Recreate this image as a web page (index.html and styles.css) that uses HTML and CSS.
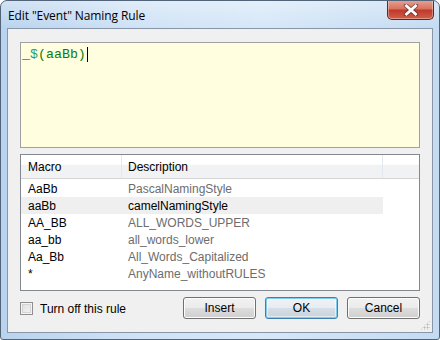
FILE: index.html
```html
<!DOCTYPE html>
<html>
<head>
<meta charset="utf-8">
<link rel="stylesheet" href="styles.css">
</head>
<body>
<div class="window">
  <div class="titlebar">
    <span class="title">Edit "Event" Naming Rule</span>
    <div class="close">
      <svg width="16" height="12" viewBox="0 0 16 12">
        <path d="M3 1.5 L13 10.5 M13 1.5 L3 10.5" stroke="#3a2a2a" stroke-width="4.4" stroke-linecap="round" opacity="0.55"/>
        <path d="M3.5 2 L12.5 10 M12.5 2 L3.5 10" stroke="#ffffff" stroke-width="2.8" stroke-linecap="square"/>
      </svg>
    </div>
  </div>
  <div class="client">
    <div class="editor"><span class="t-u">_</span><span class="t-d">$</span><span class="t-g">(aaBb)</span><span class="caret"></span></div>
    <div class="list">
      <div class="header">
        <div class="hcell c1">Macro</div>
        <div class="hcell c2">Description</div>
        <div class="hcell c3"></div>
      </div>
      <div class="row"><div class="cell c1">AaBb</div><div class="cell c2 desc">PascalNamingStyle</div></div>
      <div class="row sel"><div class="cell c1">aaBb</div><div class="cell c2">camelNamingStyle</div></div>
      <div class="row"><div class="cell c1">AA_BB</div><div class="cell c2 desc">ALL_WORDS_UPPER</div></div>
      <div class="row"><div class="cell c1">aa_bb</div><div class="cell c2 desc">all_words_lower</div></div>
      <div class="row"><div class="cell c1">Aa_Bb</div><div class="cell c2 desc">All_Words_Capitalized</div></div>
      <div class="row"><div class="cell c1">*</div><div class="cell c2 desc">AnyName_withoutRULES</div></div>
    </div>
    <div class="footer">
      <label class="check"><span class="box"></span><span>Turn off this rule</span></label>
      <div class="buttons">
        <button class="btn">Insert</button>
        <button class="btn default">OK</button>
        <button class="btn">Cancel</button>
      </div>
    </div>
    <div class="grip"></div>
  </div>
</div>
</body>
</html>
```
FILE: styles.css
```css
* { box-sizing: border-box; }
html, body { margin: 0; padding: 0; background: #ffffff; }
body { width: 440px; height: 340px; overflow: hidden; }

.window {
  width: 440px;
  height: 340px;
  border: 1px solid #52647a;
  border-radius: 7px 7px 3px 3px;
  background: linear-gradient(90deg, #b9d3ee 0%, #cfe2f6 30%, #d6e7f8 60%, #c4dbf2 100%);
  display: flex;
  flex-direction: column;
  overflow: hidden;
}

.titlebar {
  height: 27px;
  display: flex;
  justify-content: space-between;
  align-items: flex-start;
  padding-left: 7px;
  padding-right: 5px;
  background: linear-gradient(180deg, rgba(255,255,255,0.35) 0%, rgba(255,255,255,0) 100%);
}
.title {
  font-family: "Open Sans", "Noto Sans", sans-serif;
  font-size: 12px;
  color: #000;
  line-height: 14px;
  margin-top: 8px;
  letter-spacing: -0.1px;
}
.close {
  width: 47px;
  height: 20px;
  margin-top: -1px;
  border: 1px solid #5a2a24;
  border-top: none;
  border-radius: 0 0 5px 5px;
  background: linear-gradient(180deg, #e8a595 0%, #d8735f 45%, #c0392a 55%, #d0604a 100%);
  box-shadow: inset 0 0 0 1px rgba(255,255,255,0.35);
  display: flex;
  align-items: center;
  justify-content: center;
}

.client {
  position: relative;
  margin: 0 6px 6px 6px;
  flex: 1;
  border: 1px solid #8797a8;
  background: #f0f0f0;
  padding: 13px 12px 13px 12px;
  display: flex;
  flex-direction: column;
  font-family: "Liberation Sans", Arial, sans-serif;
  font-size: 12px;
}

.editor {
  height: 106px;
  border: 1px solid #a0a0a0;
  background: #ffffe0;
  padding: 4px 1px;
  font-family: "Liberation Mono", "Courier New", monospace;
  font-size: 13.3px;
  line-height: 15px;
  white-space: pre;
  display: flex;
  align-items: flex-start;
}
.t-u { color: #0000ff; }
.t-d { color: #2b9b6b; }
.t-g { color: #0a7d0a; }
.caret {
  display: inline-block;
  width: 1px;
  height: 15px;
  background: #000;
  margin-left: 1px;
}

.list {
  margin-top: 6px;
  height: 137px;
  border: 1px solid #828790;
  background: #ffffff;
  display: flex;
  flex-direction: column;
}
.header {
  display: flex;
  height: 24px;
  border-bottom: 1px solid #d5d5d5;
  background: linear-gradient(180deg, #ffffff 0%, #ffffff 41%, #f1f2f4 42%, #f1f2f4 100%);
}
.hcell {
  display: flex;
  align-items: center;
  color: #000;
  border-right: 1px solid #e3e8ee;
  line-height: 14px;
  padding-top: 1px;
}
.c1 { width: 101px; padding-left: 7px; }
.c2 { width: 261px; padding-left: 6px; }
.c3 { flex: 1; border-right: none; }

.row {
  display: flex;
  height: 17px;
  align-items: center;
  line-height: 14px;
  color: #000;
}
.header + .row { margin-top: 1px; }
.row.sel .c1, .row.sel .c2 { background: #efefef; }
.cell { height: 17px; display: flex; align-items: center; }
.desc { color: #6d6d6d; }

.footer {
  margin-top: auto;
  display: flex;
  align-items: center;
  justify-content: space-between;
}
.check {
  display: flex;
  align-items: center;
  gap: 7px;
  color: #000;
  padding-top: 1px;
}
.box {
  width: 13px;
  height: 13px;
  border: 1px solid #8f8f8f;
  background: linear-gradient(135deg, #dcdcdc 0%, #f6f6f6 100%);
  box-shadow: inset 0 0 0 1px #f4f4f4, inset 0 0 0 2px #d4d4d4;
}
.buttons {
  display: flex;
  gap: 9px;
}
.btn {
  width: 73px;
  height: 22px;
  border: 1px solid #707070;
  border-radius: 3px;
  background: linear-gradient(180deg, #f2f2f2 0%, #ebebeb 49%, #dddddd 50%, #cfcfcf 100%);
  box-shadow: inset 0 0 0 1px #fcfcfc;
  font-family: "Liberation Sans", Arial, sans-serif;
  font-size: 12px;
  color: #000;
  padding: 0;
}
.btn.default {
  border-color: #3c7fb1;
  box-shadow: inset 0 0 0 1px #7fcdf0, inset 0 0 0 2px rgba(255,255,255,0.5);
  background: linear-gradient(180deg, #eef3f7 0%, #e6ecf1 49%, #d6dee6 50%, #c9d3dc 100%);
}
.grip {
  position: absolute;
  right: 2px;
  bottom: 2px;
  width: 10px;
  height: 10px;
  background:
    radial-gradient(circle, #b8b8b8 0.8px, transparent 1.2px) 0 0 / 3px 3px;
  clip-path: polygon(100% 0, 100% 100%, 0 100%);
}
```
